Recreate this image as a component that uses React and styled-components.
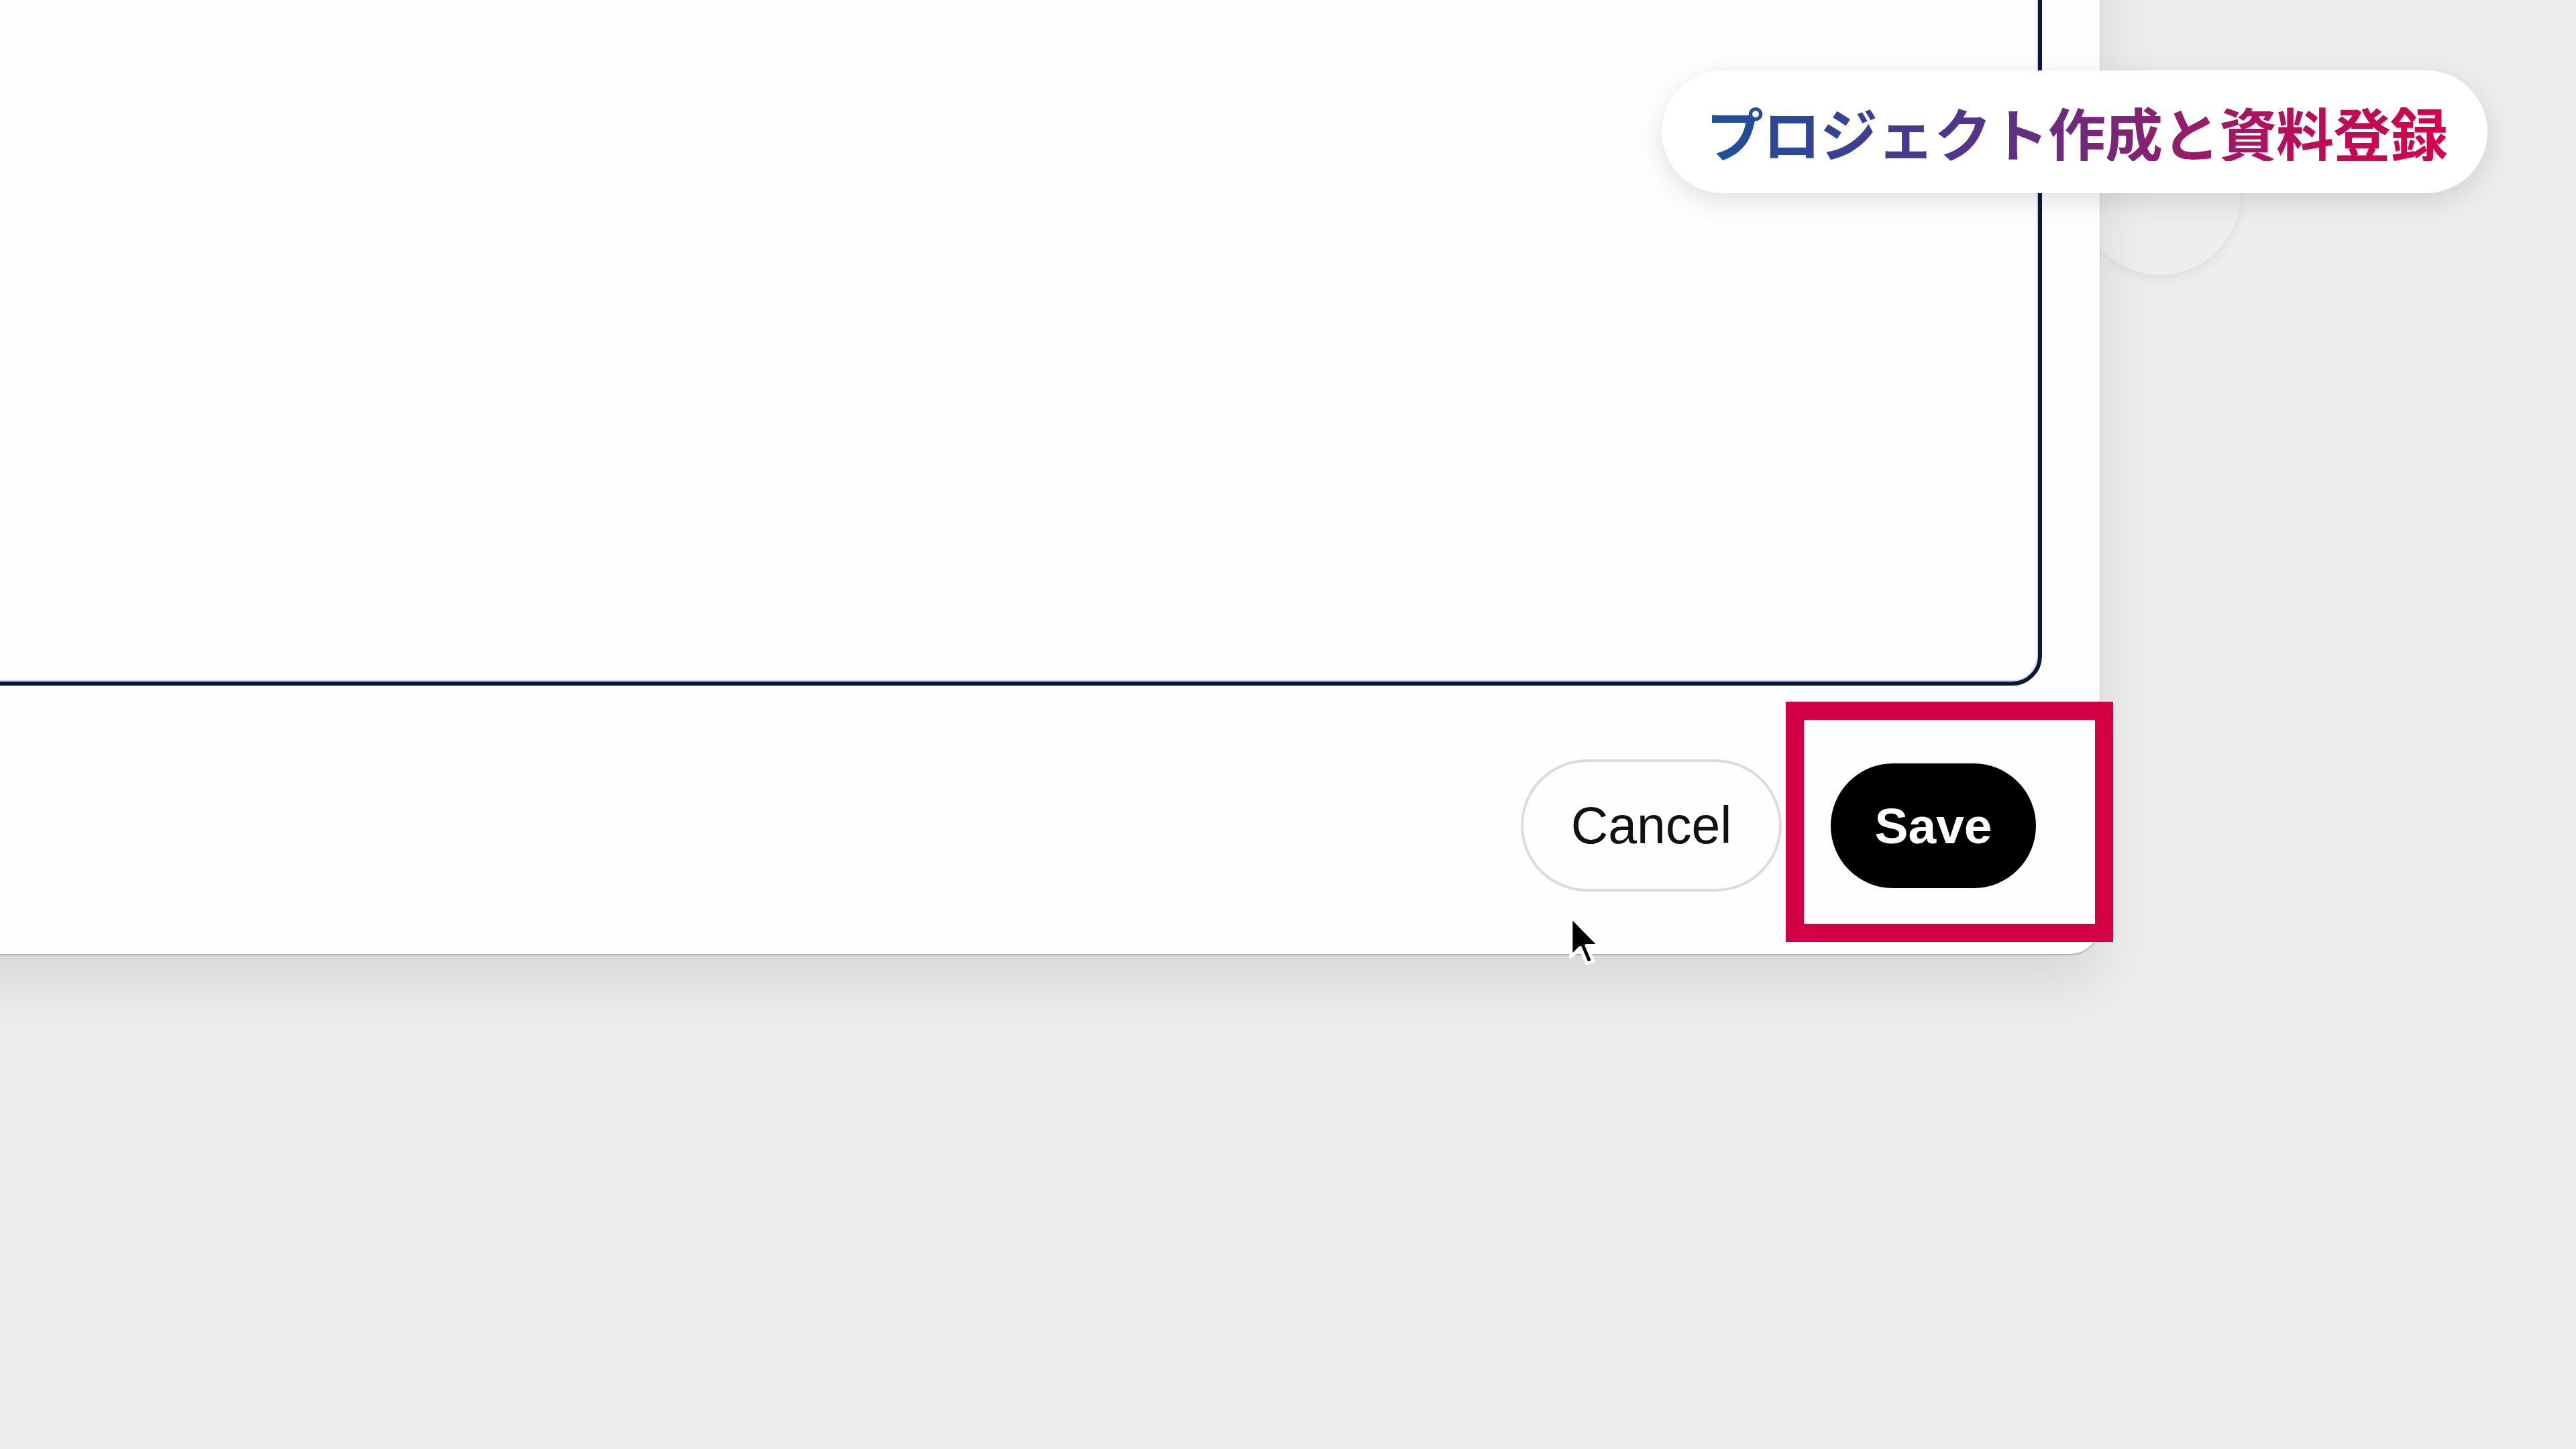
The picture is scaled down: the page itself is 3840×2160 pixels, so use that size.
import React from 'react';
import styled, { createGlobalStyle } from 'styled-components';

const GlobalStyle = createGlobalStyle`
  html, body {
    margin: 0;
    padding: 0;
    background: #ededed;
    overflow: hidden;
  }
`;

const Stage = styled.div`
  position: relative;
  width: 3840px;
  height: 2160px;
  overflow: hidden;
  background: #ededed;
  font-family: "Liberation Sans", Arial, sans-serif;
`;

// faint round button peeking out from behind the modal / caption
const GhostButton = styled.div`
  position: absolute;
  left: 3100px;
  top: 170px;
  width: 240px;
  height: 240px;
  border-radius: 50%;
  background: #eeeeee;
  box-shadow: 0 6px 14px rgba(0, 0, 0, 0.06), 0 0 0 1px rgba(0, 0, 0, 0.02);
  z-index: 0;
`;

const Modal = styled.div`
  position: relative;
  z-index: 1;
  width: 3230px;
  margin-left: -100px;
  margin-top: -200px;
  box-sizing: border-box;
  padding: 0 86px 93px 0;
  background: #fefefe;
  border-radius: 44px;
  box-shadow: 0 2px 2px rgba(0, 0, 0, 0.18), 0 40px 90px rgba(0, 0, 0, 0.1),
    0 0 0 1px rgba(0, 0, 0, 0.05);
  display: flex;
  flex-direction: column;
`;

const TextArea = styled.div`
  height: 1210px;
  border: 6px solid #0c182d;
  border-radius: 44px;
  box-shadow: inset 0 0 0 2px rgba(140, 190, 240, 0.55);
  background: #fefefe;
`;

const Footer = styled.div`
  display: flex;
  justify-content: flex-end;
  align-items: center;
  gap: 73px;
  margin-top: 110px;
  padding-right: 9px;
`;

const PillButton = styled.button`
  font-family: "Liberation Sans", Arial, sans-serif;
  font-size: ${(p) => (p.$primary ? 75 : 77)}px;
  border-radius: 999px;
  cursor: pointer;
  display: flex;
  align-items: center;
  justify-content: center;
  box-sizing: border-box;
  padding: 0;
  width: ${(p) => p.$w}px;
  height: ${(p) => p.$h}px;
  background: ${(p) => (p.$primary ? '#000' : '#fefefe')};
  color: ${(p) => (p.$primary ? '#fff' : '#111')};
  font-weight: ${(p) => (p.$primary ? 700 : 400)};
  border: ${(p) => (p.$primary ? 'none' : '4px solid #dcdcdc')};
`;

const Highlight = styled.div`
  position: relative;
`;

const HighlightFrame = styled.div`
  position: absolute;
  top: -92px;
  right: -115px;
  bottom: -80px;
  left: -67px;
  border: 27px solid #d40045;
  pointer-events: none;
`;

const Caption = styled.div`
  position: absolute;
  z-index: 2;
  top: 105px;
  right: 132px;
  height: 183px;
  box-sizing: border-box;
  padding: 0 60px 0 66px;
  display: flex;
  align-items: center;
  background: #ffffff;
  border-radius: 92px;
  box-shadow: 0 12px 40px rgba(0, 0, 0, 0.12);
`;

const CaptionText = styled.span`
  font-family: "Noto Sans CJK JP", "Noto Sans", sans-serif;
  font-weight: 700;
  font-size: 86px;
  letter-spacing: -1px;
  line-height: 1;
  white-space: nowrap;
  background: linear-gradient(90deg, #1b519c 0%, #4a3890 30%, #7a2676 55%, #b0125f 75%, #d8004a 100%);
  -webkit-background-clip: text;
  background-clip: text;
  -webkit-text-fill-color: transparent;
`;

const Pointer = styled.svg`
  position: absolute;
  z-index: 3;
  left: 2338px;
  top: 1362px;
  width: 54px;
  height: 82px;
`;

function App() {
  return (
    <Stage>
      <GlobalStyle />
      <GhostButton />
      <Modal>
        <TextArea />
        <Footer>
          <PillButton $w={389} $h={197}>Cancel</PillButton>
          <Highlight>
            <PillButton $primary $w={306} $h={186}>Save</PillButton>
            <HighlightFrame />
          </Highlight>
        </Footer>
      </Modal>
      <Caption>
        <CaptionText>プロジェクト作成と資料登録</CaptionText>
      </Caption>
      <Pointer viewBox="0 0 14 21">
        <path
          d="M1 1 L1 16.5 L4.6 13 L7.2 19.2 L9.6 18.2 L7 12.2 L12 12.2 Z"
          fill="#000"
          stroke="#fff"
          strokeWidth="1.3"
          strokeLinejoin="round"
        />
      </Pointer>
    </Stage>
  );
}

export default App;
